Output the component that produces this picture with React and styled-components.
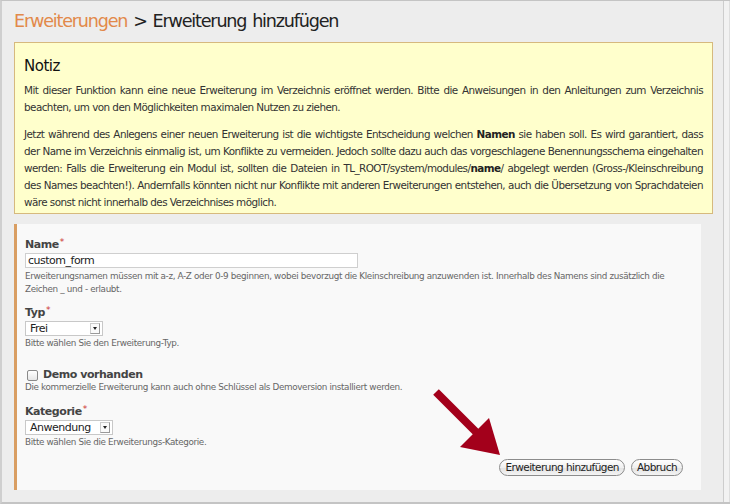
import React from 'react';
import styled, { createGlobalStyle } from 'styled-components';

const GlobalStyle = createGlobalStyle`
  html, body {margin: 0; padding: 0; background: #ededed;}
  body {font-family: "DejaVu Sans", Verdana, sans-serif;}
`;

const Frame = styled.div`
  width: 730px;
  height: 504px;
  box-sizing: border-box;
  display: flex;
  background: #ededed;
  border-top: 1px solid #c4c4c4;
  border-left: 2px solid #cfcfcf;
  border-bottom: 2px solid #c4c4c4;
  overflow: hidden;
`;
const Content = styled.div`
  flex: 1;
  position: relative;
  padding: 9px 10px 0 12px;
`;
const Gutter = styled.div`
  width: 5px;
  background: #f2f2f2;
  border-left: 1px solid #cdcdcd;
  border-right: 1px solid #dedede;
`;
const Heading = styled.h1`
  margin: 0 0 9px;
  font-size: 17.6px;
  font-weight: normal;
  line-height: 23px;
  color: #222;
  letter-spacing: -1.2px;
  word-spacing: 1.5px;
  span {color: #e2894a;}
`;
const Note = styled.div`
  background: #ffffcc;
  border: 1px solid #d6b97e;
  padding: 13px 9px 2px;
  color: #333;
`;
const NoteTitle = styled.h2`
  margin: 0 0 6px;
  font-size: 15px;
  font-weight: normal;
  color: #111;
  line-height: 20px;
  letter-spacing: -0.5px;
`;
const NoteText = styled.p`
  margin: 0 0 10px;
  font-size: 10.4px;
  line-height: 17px;
  letter-spacing: -0.55px;
  text-align: justify;
  &:last-child {margin-bottom: 0;}
  b {color: #222;}
`;
const Panel = styled.div`
  margin: 10px 12px 0 0;
  height: 266px;
  box-sizing: border-box;
  background: #f9f9f9;
  border-left: 3px solid #d99e62;
  padding: 13px 8px 0;
  position: relative;
`;
const Field = styled.div`
  margin-bottom: ${p => p.after}px;
`;
const Label = styled.div`
  font-size: 11px;
  font-weight: bold;
  color: #444;
  line-height: ${p => (p.tight ? 12 : 15)}px;
  letter-spacing: -0.45px;
  display: flex;
  align-items: center;
  em {color: #c33; font-style: normal; font-weight: normal; font-size: 9px; align-self: flex-start; line-height: 11px; margin-left: 1px;}
`;
const TextInput = styled.div`
  margin-top: 1px;
  width: 333px;
  height: 15px;
  box-sizing: border-box;
  border: 1px solid #cfcfcf;
  background: #fff;
  font-size: 11px;
  line-height: 13px;
  padding-left: 2px;
  letter-spacing: -0.5px;
  color: #222;
`;
const Help = styled.div`
  font-size: 8.8px;
  line-height: 13px;
  letter-spacing: -0.35px;
  color: #666;
  margin-top: ${p => p.top || 0}px;
`;
const Select = styled.div`
  margin-top: 1px;
  display: flex;
  align-items: center;
  width: ${p => p.w}px;
  height: 15px;
  box-sizing: border-box;
  border: 1px solid #c8c8c8;
  background: #fff;
  font-size: 11px;
  line-height: 13px;
  letter-spacing: -0.5px;
  color: #222;
`;
const SelectValue = styled.span`
  flex: 1;
  padding-left: 4px;
`;
const SelectArrow = styled.span`
  width: 10px;
  height: 11px;
  margin-right: 2px;
  box-sizing: border-box;
  border: 1px solid #999;
  border-top-color: #ccc;
  border-left-color: #ccc;
  display: flex;
  align-items: center;
  justify-content: center;
  background: #fafafa;
  &::after {
    content: "";
    border-left: 2.5px solid transparent;
    border-right: 2.5px solid transparent;
    border-top: 3px solid #222;
  }
`;
const Check = styled.span`
  width: 9px;
  height: 9px;
  border: 1px solid #8a8a8a;
  border-radius: 2px;
  background: linear-gradient(#fff, #e6e6e6);
  margin: 0 5px 0 2px;
`;
const Buttons = styled.div`
  position: absolute;
  right: 18px;
  bottom: 14px;
  display: flex;
  gap: 6px;
`;
const Button = styled.button`
  font-family: "DejaVu Sans", Verdana, sans-serif;
  font-size: 10.5px;
  letter-spacing: -0.55px;
  height: 17px;
  padding: 0 5px;
  border: 1px solid #8c8c8c;
  border-radius: 9px;
  color: #222;
  background: linear-gradient(#ffffff, #f0f0f0 50%, #e2e2e2 51%, #f4f4f4);
  line-height: 15px;
`;
const Arrow = styled.svg`
  position: absolute;
  left: 416px;
  top: 165px;
`;

export default function App() {
  return (
    <>
      <GlobalStyle />
      <Frame>
        <Content>
          <Heading><span>Erweiterungen</span> &gt; Erweiterung hinzufügen</Heading>
          <Note>
            <NoteTitle>Notiz</NoteTitle>
            <NoteText>Mit dieser Funktion kann eine neue Erweiterung im Verzeichnis eröffnet werden. Bitte die Anweisungen in den Anleitungen zum Verzeichnis beachten, um von den Möglichkeiten maximalen Nutzen zu ziehen.</NoteText>
            <NoteText>Jetzt während des Anlegens einer neuen Erweiterung ist die wichtigste Entscheidung welchen <b>Namen</b> sie haben soll. Es wird garantiert, dass der Name im Verzeichnis einmalig ist, um Konflikte zu vermeiden. Jedoch sollte dazu auch das vorgeschlagene Benennungsschema eingehalten werden: Falls die Erweiterung ein Modul ist, sollten die Dateien in TL_ROOT/system/modules/<b>name</b>/ abgelegt werden (Gross-/Kleinschreibung des Names beachten!). Andernfalls könnten nicht nur Konflikte mit anderen Erweiterungen entstehen, auch die Übersetzung von Sprachdateien wäre sonst nicht innerhalb des Verzeichnises möglich.</NoteText>
          </Note>
          <Panel>
            <Field after={9}>
              <Label>Name<em>*</em></Label>
              <TextInput>custom_form</TextInput>
              <Help top={2}>Erweiterungsnamen müssen mit a-z, A-Z oder 0-9 beginnen, wobei bevorzugt die Kleinschreibung anzuwenden ist. Innerhalb des Namens sind zusätzlich die Zeichen _ und - erlaubt.</Help>
            </Field>
            <Field after={19}>
              <Label>Typ<em>*</em></Label>
              <Select w={78}><SelectValue>Frei</SelectValue><SelectArrow /></Select>
              <Help top={1}>Bitte wählen Sie den Erweiterung-Typ.</Help>
            </Field>
            <Field after={10}>
              <Label tight><Check />Demo vorhanden</Label>
              <Help>Die kommerzielle Erweiterung kann auch ohne Schlüssel als Demoversion installiert werden.</Help>
            </Field>
            <Field after={0}>
              <Label>Kategorie<em>*</em></Label>
              <Select w={88}><SelectValue>Anwendung</SelectValue><SelectArrow /></Select>
              <Help top={1}>Bitte wählen Sie die Erweiterungs-Kategorie.</Help>
            </Field>
            <Buttons>
              <Button>Erweiterung hinzufügen</Button>
              <Button>Abbruch</Button>
            </Buttons>
            <Arrow width="72" height="70" viewBox="0 0 72 70">
              <line x1="3" y1="3" x2="46" y2="46" stroke="#a3001b" strokeWidth="8" />
              <polygon points="27,58 56,29 67,66" fill="#a3001b" />
            </Arrow>
          </Panel>
        </Content>
        <Gutter />
      </Frame>
    </>
  );
}
